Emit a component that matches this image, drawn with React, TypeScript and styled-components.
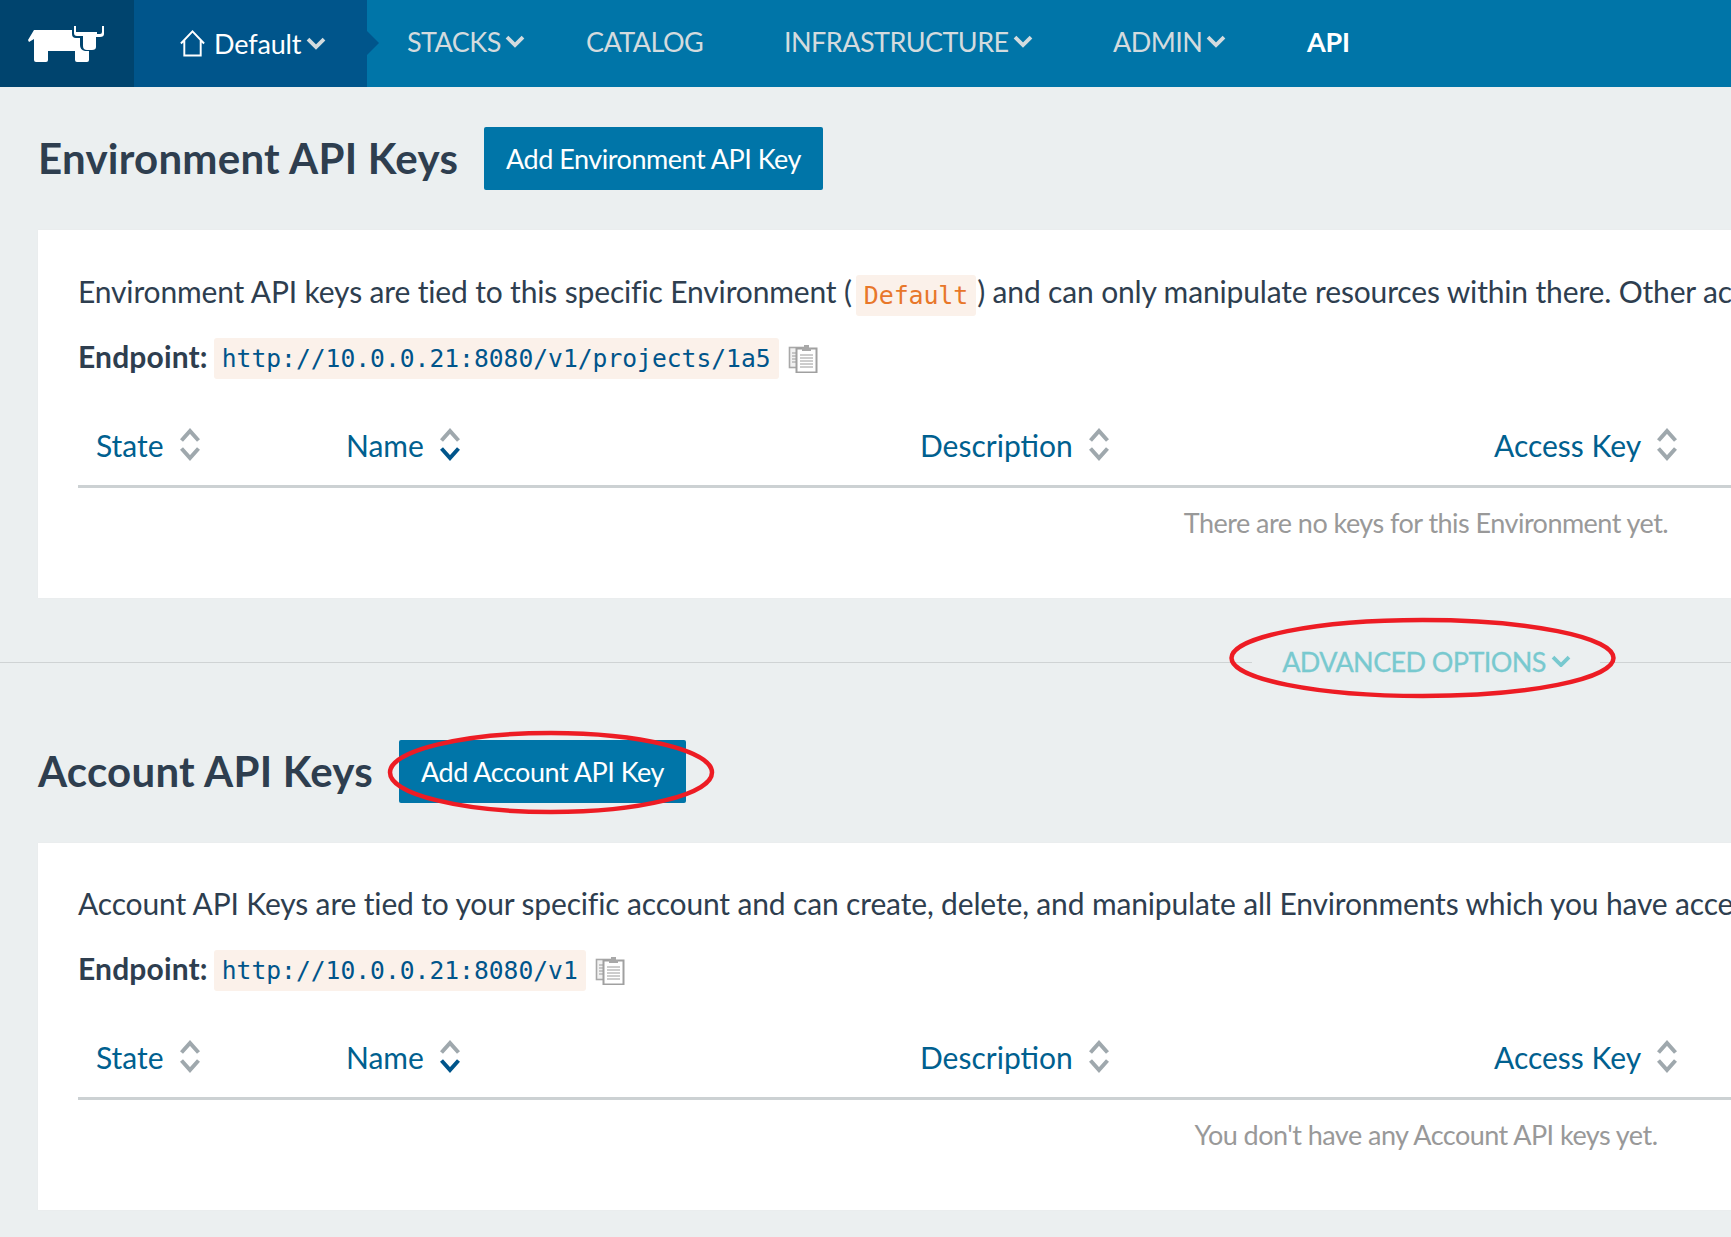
import React from 'react';
import styled, { createGlobalStyle } from 'styled-components';

const Global = createGlobalStyle`
  html, body { margin: 0; padding: 0; overflow: hidden; background: #ebeff0; }
  body { width: 1731px; height: 1237px; font-family: Lato, "Liberation Sans", sans-serif; }
`;
const Page = styled.div`position: relative; width: 1731px; height: 1237px; overflow: hidden; background: #ebeff0; color: #2e3e4f;`;
const Nav = styled.nav`display: flex; height: 87px; background: #0075a8; align-items: stretch;`;
const LogoCell = styled.div`width: 134px; padding-right: 2px; box-sizing: border-box; background: #00446e; display: flex; align-items: center; justify-content: center;`;
const HomeCell = styled.div`position: relative; width: 233px; background: #00558b; display: flex; align-items: center; padding-left: 45px; box-sizing: border-box; color: #fff; font-size: 27px; gap: 8px;
  &::after { content: ''; position: absolute; right: -12px; top: 31px; border-left: 12px solid #00558b; border-top: 12px solid transparent; border-bottom: 12px solid transparent; }`;
const HomeLabel = styled.span`letter-spacing: -0.15px; margin-right: -3px;`;
const NavList = styled.div`display: flex; align-items: center; padding-left: 40px; padding-bottom: 4px;`;
const NavItem = styled.div<{ $w: number; $active?: boolean }>`width: ${p => p.$w}px; display: flex; align-items: center; gap: 4px; font-size: 27px; color: ${p => p.$active ? '#fff' : '#d3dbde'}; font-weight: ${p => p.$active ? 700 : 400}; letter-spacing: ${p => p.$active ? '-0.2px' : '-0.55px'};`;
const Section = styled.section`padding: 40px 0 0 38px;`;
const SectionTwo = styled(Section)`padding-top: 142px;`;
const Head = styled.div`display: flex; align-items: center; gap: 26px; height: 63px;`;
const Title = styled.h1`margin: 0; font-size: 42px; font-weight: 700; color: #2e3e4f; letter-spacing: 0.25px; white-space: nowrap; position: relative; top: -1px;`;
const Btn = styled.button`height: 63px; padding: 0 22px; border: 0; border-radius: 2px; background: #0075a8; color: #fff; font: 400 27px Lato, sans-serif; white-space: nowrap; letter-spacing: -0.48px;`;
const Card = styled.div`margin-top: 40px; width: 2776px; box-sizing: border-box; background: #fff; padding: 40px 40px 0; height: 368px; box-shadow: 0 0 1px #e3e7e8;`;
const CardTwo = styled(Card)`padding-top: 39px; height: 367px;`;
const Para = styled.p`margin: 0; display: flex; align-items: center; height: 41px; font-size: 30px; letter-spacing: -0.15px; white-space: nowrap;`;
const InlineCode = styled.code`font: 25px "DejaVu Sans Mono", monospace; background: #fbf1ea; color: #e8772a; border-radius: 3px; padding: 0 8px; height: 41px; line-height: 42px; margin: 9px 1px 0 4px;`;
const Endpoint = styled.div`display: flex; align-items: center; margin-top: 24px; height: 41px; font-size: 30px; white-space: nowrap;`;
const EndLabel = styled.strong`font-weight: 700; letter-spacing: 0.15px; margin-right: 6px;`;
const Url = styled.code`font: 24.65px "DejaVu Sans Mono", monospace; background: #fbf1ea; color: #00558b; border-radius: 3px; padding: 0 8px; height: 41px; line-height: 42px; margin-top: 5px;`;
const Copy = styled.span`display: inline-flex; margin: 5px 0 0 9px;`;
const Table = styled.div`margin-top: 28px;`;
const HeadRow = styled.div`display: grid; grid-template-columns: 250px 574px 574px 1fr; height: 81px; align-items: center; border-bottom: 3px solid #ccd1d3; box-sizing: content-box;`;
const Col = styled.div`display: flex; align-items: center; gap: 15px; padding-left: 18px; font-size: 30px; color: #00608f; letter-spacing: 0;`;
const Empty = styled.div`text-align: center; color: #999; font-size: 27px; padding-top: 18px; letter-spacing: -0.53px;`;
const DividerRow = styled.div`position: absolute; left: 0; right: 0; top: 662px; border-top: 1px solid #cfd3d4; height: 0;`;
const AdvGap = styled.div`position: absolute; left: 1252px; top: -25px; width: 348px; height: 46px; background: #ebeff0; display: flex; align-items: center; justify-content: center; gap: 5px; color: #78c9cf; font-size: 27px; letter-spacing: -0.6px; padding-left: 1px; box-sizing: border-box; -webkit-text-stroke: 0.3px #78c9cf;`;
const Marks = styled.svg`position: absolute; left: 0; top: 0; pointer-events: none;`;

const Chevron = ({ color, size = 20 }: { color: string; size?: number }) => (
  <svg width={size} height={size * 0.62} viewBox="0 0 18 11"><path d="M1.8 1.8 L9 9 L16.2 1.8" fill="none" stroke={color} strokeWidth="3.4" /></svg>
);
const Sort = ({ active }: { active?: boolean }) => (
  <svg width="22" height="33" viewBox="0 0 22 33"><path d="M2.5 12.5 L11 3 L19.5 12.5" fill="none" stroke="#9fa8ad" strokeWidth="4" /><path d="M2.5 20.5 L11 30 L19.5 20.5" fill="none" stroke={active ? '#00558b' : '#9fa8ad'} strokeWidth="4" /></svg>
);
const Clip = () => (
  <svg width="30" height="30" viewBox="0 0 30 30">
    <rect x="1.5" y="4.5" width="17" height="20" fill="#f1f1f1" stroke="#a8a8a8" strokeWidth="1.6" />
    <rect x="8.5" y="5.5" width="20" height="24" fill="#fff" stroke="#a0a0a0" strokeWidth="2" />
    <path d="M14 5 L16 5 L16 2 L21 2 L21 5 L23 5 L23 8 L14 8 Z" fill="#a8a8a8" />
    <path d="M4 10H8M4 13H8M4 16H8M4 19H8M12 12H25M12 15H25M12 18H25M12 21H25M12 24H25" stroke="#9a9a9a" strokeWidth="1" />
  </svg>
);
const Logo = () => (
  <svg width="80" height="40" viewBox="26 23 80 40">
    <path fill="#fff" d="M28 39 L34 29 L72 29 L72 33 Q72 37 76 37 L80 37 L80 44 Q80 49 85 50 L89 50 L89 59 Q89 61 87 61 L77 61 Q75 61 75 59 L75 50 L48 50 L48 59 Q48 61 46 61 L36 61 Q34 61 34 59 L34 38 L29 41 Z" />
    <path fill="#fff" d="M74 25 L76 25 L76 31 L97 31 L97 33 L100 33 Q102 33 102 31 L102 25 L104 25 L104 33 Q104 36 100 36 L96 36 L96 46 Q96 49 92 49 L87 49 Q83 49 83 45 L83 35 L77 35 Q74 35 74 32 Z" />
  </svg>
);
const Home = () => (
  <svg width="27" height="27" viewBox="0 0 26 28"><path d="M1 14 L13 1.5 L25 14 M4.5 11 V26.5 H21.5 V11" fill="none" stroke="#fff" strokeWidth="2" /></svg>
);

const Columns = () => (
  <HeadRow>
    <Col>State <Sort /></Col>
    <Col>Name <Sort active /></Col>
    <Col>Description <Sort /></Col>
    <Col>Access Key <Sort /></Col>
  </HeadRow>
);

export default function App() {
  return (
    <Page>
      <Global />
      <Nav>
        <LogoCell><Logo /></LogoCell>
        <HomeCell><Home /> <HomeLabel>Default</HomeLabel> <Chevron color="#d3dbde" /></HomeCell>
        <NavList>
          <NavItem $w={179}>STACKS <Chevron color="#d3dbde" /></NavItem>
          <NavItem $w={198}>CATALOG</NavItem>
          <NavItem $w={329}>INFRASTRUCTURE <Chevron color="#d3dbde" /></NavItem>
          <NavItem $w={194}>ADMIN <Chevron color="#d3dbde" /></NavItem>
          <NavItem $w={60} $active>API</NavItem>
        </NavList>
      </Nav>
      <Section>
        <Head>
          <Title>Environment API Keys</Title>
          <Btn>Add Environment API Key</Btn>
        </Head>
        <Card>
          <Para>Environment API keys are tied to this specific Environment (<InlineCode>Default</InlineCode>) and can only manipulate resources within there. Other accounts cannot see or use them.</Para>
          <Endpoint><EndLabel>Endpoint:</EndLabel><Url>http://10.0.0.21:8080/v1/projects/1a5</Url><Copy><Clip /></Copy></Endpoint>
          <Table>
            <Columns />
            <Empty>There are no keys for this Environment yet.</Empty>
          </Table>
        </Card>
      </Section>
      <DividerRow><AdvGap>ADVANCED OPTIONS <Chevron color="#78c9cf" /></AdvGap></DividerRow>
      <SectionTwo>
        <Head>
          <Title>Account API Keys</Title>
          <Btn>Add Account API Key</Btn>
        </Head>
        <CardTwo>
          <Para>Account API Keys are tied to your specific account and can create, delete, and manipulate all Environments which you have access to.</Para>
          <Endpoint><EndLabel>Endpoint:</EndLabel><Url>http://10.0.0.21:8080/v1</Url><Copy><Clip /></Copy></Endpoint>
          <Table>
            <Columns />
            <Empty>You don't have any Account API keys yet.</Empty>
          </Table>
        </CardTwo>
      </SectionTwo>
      <Marks width="1731" height="1237" viewBox="0 0 1731 1237">
        <ellipse cx="1422.5" cy="658" rx="191" ry="38" fill="none" stroke="#ed1c24" strokeWidth="4.5" />
        <ellipse cx="551" cy="772.5" rx="161" ry="39.5" fill="none" stroke="#ed1c24" strokeWidth="4.5" />
      </Marks>
    </Page>
  );
}
